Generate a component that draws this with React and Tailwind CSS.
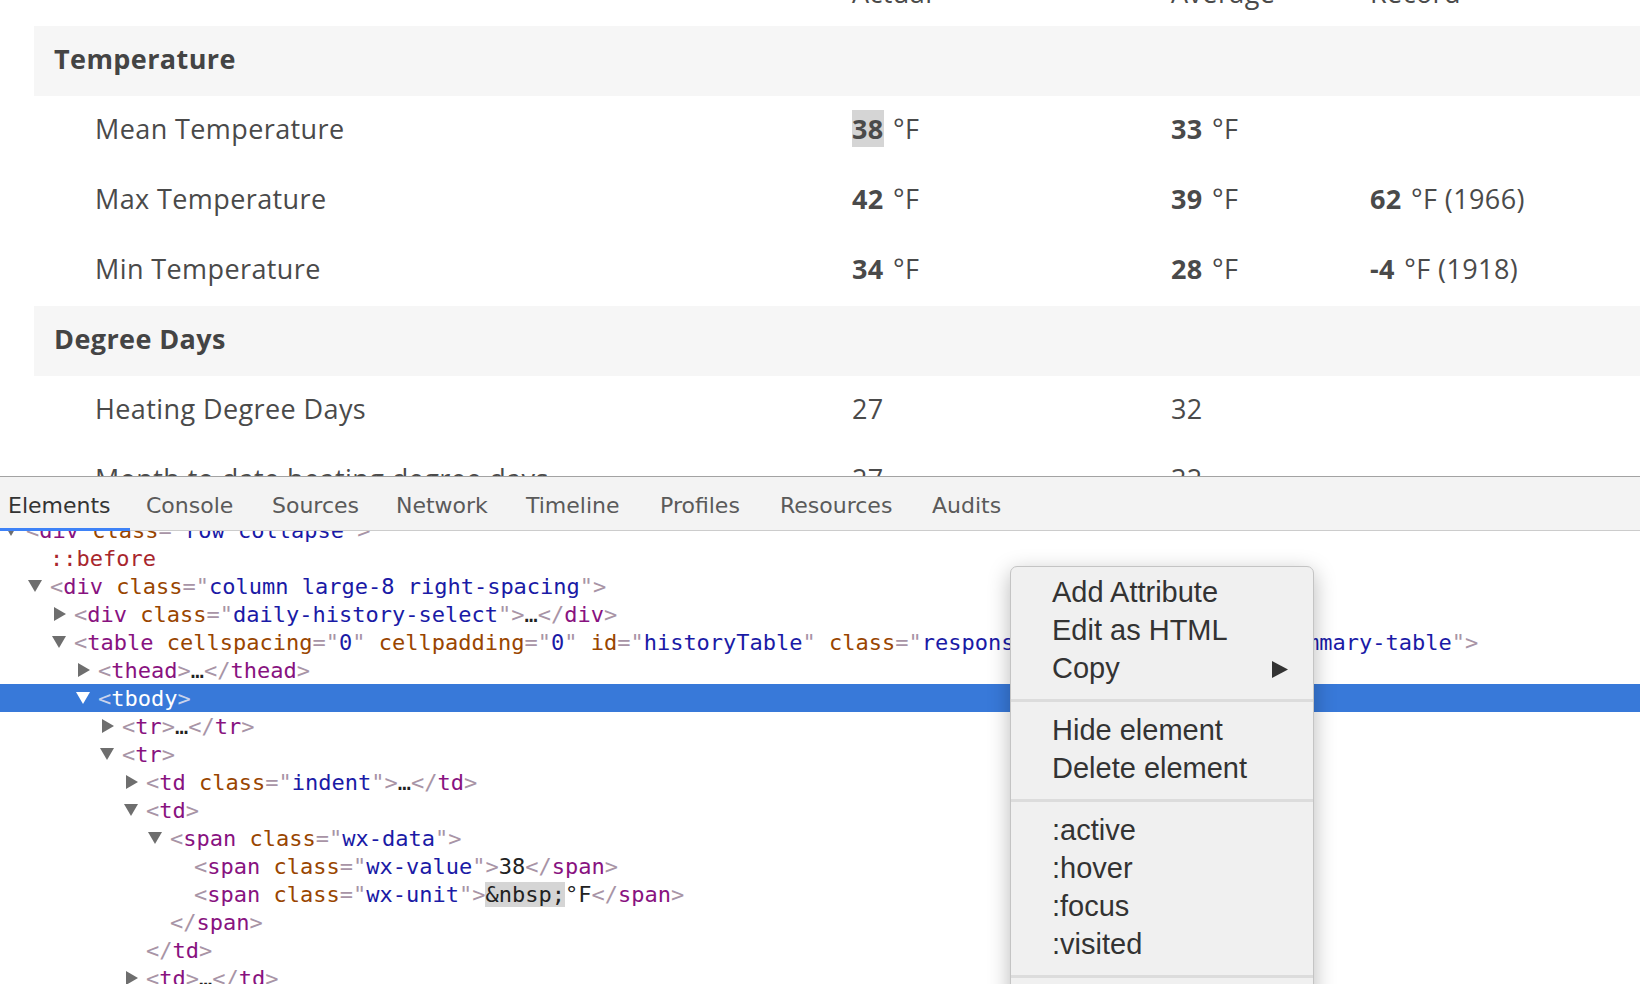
import React from "react";

const PAD = {
  "-1": "pl-[2px]",
  0: "pl-[26px]",
  1: "pl-[50px]",
  2: "pl-[74px]",
  3: "pl-[98px]",
  4: "pl-[122px]",
  5: "pl-[146px]",
  6: "pl-[170px]",
};

function Down({ white }) {
  return (
    <svg width="14" height="12" viewBox="0 0 14 12" className="ml-[2px]">
      <path d="M0 0 H14 L7 12 Z" fill={white ? "#ffffff" : "#6e6e6e"} />
    </svg>
  );
}

function Right() {
  return (
    <svg width="12" height="14" viewBox="0 0 12 14" className="ml-[4px]">
      <path d="M0 0 L12 7 L0 14 Z" fill="#6e6e6e" />
    </svg>
  );
}

const P = ({ c, sel }) => <span className={sel ? "text-[#c9d3ec]" : "text-[#a894a6]"}>{c}</span>;
const Tg = ({ c, sel }) => <span className={sel ? "text-white" : "text-[#881280]"}>{c}</span>;
const At = ({ c }) => <span className="text-[#994500]">{c}</span>;
const Vl = ({ c }) => <span className="text-[#1a1aa6]">{c}</span>;
const Tx = ({ c }) => <span className="text-[#222222]">{c}</span>;

function Attr({ name, value }) {
  return (
    <>
      {" "}
      <At c={name} />
      <P c={'="'} />
      <Vl c={value} />
      <P c={'"'} />
    </>
  );
}

function TreeRow({ level, arrow, selected, children }) {
  return (
    <div
      className={`flex h-[28px] items-center whitespace-nowrap ${PAD[level]} ${
        selected ? "bg-[#3879d9]" : ""
      }`}
    >
      <div className="flex w-[24px] shrink-0 items-center">
        {arrow === "down" && <Down white={selected} />}
        {arrow === "right" && <Right />}
      </div>
      <div>{children}</div>
    </div>
  );
}

function Value({ n, unit, extra, bold = true, hl }) {
  return (
    <span>
      <span className={`${bold ? "font-bold" : ""} ${hl ? "bg-[#d5d5d5]" : ""}`}>{n}</span>
      {unit && <span className="ml-[2px]"> °F</span>}
      {extra && <span> {extra}</span>}
    </span>
  );
}

function DataRow({ label, a, b, c, head }) {
  return (
    <div className={`flex h-[70px] items-center ${head ? "pt-[5px]" : "pb-[3px]"}`}>
      <div className="w-[818px] shrink-0 pl-[61px]">{label}</div>
      <div className="w-[319px] shrink-0">{a}</div>
      <div className="w-[199px] shrink-0">{b}</div>
      <div>{c}</div>
    </div>
  );
}

function Band({ title }) {
  return (
    <div className="flex h-[70px] items-center bg-[#f6f6f6] pb-[3px] pl-[20px] font-bold text-[#444444]">
      {title}
    </div>
  );
}

const tabs = [
  ["Elements", "w-[138px]"],
  ["Console", "w-[126px]"],
  ["Sources", "w-[124px]"],
  ["Network", "w-[130px]"],
  ["Timeline", "w-[134px]"],
  ["Profiles", "w-[120px]"],
  ["Resources", "w-[152px]"],
  ["Audits", "w-[120px]"],
];

const menu = [
  ["Add Attribute", "Edit as HTML", "Copy"],
  ["Hide element", "Delete element"],
  [":active", ":hover", ":focus", ":visited"],
];

export default function App() {
  return (
    <div className="relative h-[984px] w-[1640px] overflow-hidden bg-white">
      {/* Page content */}
      <div className="h-[476px] overflow-hidden font-['Open_Sans',sans-serif] text-[27px] tracking-[0.4px] text-[#4a4a4a]">
        <div className="-mt-[44px] pl-[34px]">
          <DataRow head label="" a="Actual" b="Average" c="Record" />
          <Band title="Temperature" />
          <DataRow label="Mean Temperature" a={<Value n="38" unit hl />} b={<Value n="33" unit />} />
          <DataRow
            label="Max Temperature"
            a={<Value n="42" unit />}
            b={<Value n="39" unit />}
            c={<Value n="62" unit extra="(1966)" />}
          />
          <DataRow
            label="Min Temperature"
            a={<Value n="34" unit />}
            b={<Value n="28" unit />}
            c={<Value n="-4" unit extra="(1918)" />}
          />
          <Band title="Degree Days" />
          <DataRow label="Heating Degree Days" a="27" b="32" />
          <DataRow label="Month to date heating degree days" a="27" b="32" />
        </div>
      </div>

      {/* DevTools */}
      <div className="border-t border-[#a3a3a3]">
        <div className="flex h-[54px] items-center border-b border-[#cccccc] bg-[#f3f3f3] pl-[8px] pt-[3px] font-['DejaVu_Sans',sans-serif] text-[22px] text-[#5a5a5a]">
          {tabs.map(([t, w], i) => (
            <div key={t} className={`${w} relative flex h-full items-center ${i === 0 ? "text-[#333333]" : ""}`}>
              {t}
              {i === 0 && <div className="absolute bottom-[-1px] left-[-8px] h-[3px] w-[130px] bg-[#3e82f7]" />}
            </div>
          ))}
        </div>

        <div className="h-[453px] overflow-hidden font-['DejaVu_Sans_Mono',monospace] text-[22px]">
          <div className="-mt-[15px]">
            <TreeRow level={-1} arrow="down">
              <P c="<" />
              <Tg c="div" />
              <Attr name="class" value="row collapse" />
              <P c=">" />
            </TreeRow>
            <TreeRow level={0}>
              <span className="text-[#a8262d]">::before</span>
            </TreeRow>
            <TreeRow level={0} arrow="down">
              <P c="<" />
              <Tg c="div" />
              <Attr name="class" value="column large-8 right-spacing" />
              <P c=">" />
            </TreeRow>
            <TreeRow level={1} arrow="right">
              <P c="<" />
              <Tg c="div" />
              <Attr name="class" value="daily-history-select" />
              <P c=">" />
              <Tx c="…" />
              <P c="</" />
              <Tg c="div" />
              <P c=">" />
            </TreeRow>
            <TreeRow level={1} arrow="down">
              <P c="<" />
              <Tg c="table" />
              <Attr name="cellspacing" value="0" />
              <Attr name="cellpadding" value="0" />
              <Attr name="id" value="historyTable" />
              <Attr name="class" value="responsive airport-history-summary-table" />
              <P c=">" />
            </TreeRow>
            <TreeRow level={2} arrow="right">
              <P c="<" />
              <Tg c="thead" />
              <P c=">" />
              <Tx c="…" />
              <P c="</" />
              <Tg c="thead" />
              <P c=">" />
            </TreeRow>
            <TreeRow level={2} arrow="down" selected>
              <P c="<" sel />
              <Tg c="tbody" sel />
              <P c=">" sel />
            </TreeRow>
            <TreeRow level={3} arrow="right">
              <P c="<" />
              <Tg c="tr" />
              <P c=">" />
              <Tx c="…" />
              <P c="</" />
              <Tg c="tr" />
              <P c=">" />
            </TreeRow>
            <TreeRow level={3} arrow="down">
              <P c="<" />
              <Tg c="tr" />
              <P c=">" />
            </TreeRow>
            <TreeRow level={4} arrow="right">
              <P c="<" />
              <Tg c="td" />
              <Attr name="class" value="indent" />
              <P c=">" />
              <Tx c="…" />
              <P c="</" />
              <Tg c="td" />
              <P c=">" />
            </TreeRow>
            <TreeRow level={4} arrow="down">
              <P c="<" />
              <Tg c="td" />
              <P c=">" />
            </TreeRow>
            <TreeRow level={5} arrow="down">
              <P c="<" />
              <Tg c="span" />
              <Attr name="class" value="wx-data" />
              <P c=">" />
            </TreeRow>
            <TreeRow level={6}>
              <P c="<" />
              <Tg c="span" />
              <Attr name="class" value="wx-value" />
              <P c=">" />
              <Tx c="38" />
              <P c="</" />
              <Tg c="span" />
              <P c=">" />
            </TreeRow>
            <TreeRow level={6}>
              <P c="<" />
              <Tg c="span" />
              <Attr name="class" value="wx-unit" />
              <P c=">" />
              <span className="bg-[#d5d5d5] text-[#222222]">&amp;nbsp;</span>
              <Tx c="°F" />
              <P c="</" />
              <Tg c="span" />
              <P c=">" />
            </TreeRow>
            <TreeRow level={5}>
              <P c="</" />
              <Tg c="span" />
              <P c=">" />
            </TreeRow>
            <TreeRow level={4}>
              <P c="</" />
              <Tg c="td" />
              <P c=">" />
            </TreeRow>
            <TreeRow level={4} arrow="right">
              <P c="<" />
              <Tg c="td" />
              <P c=">" />
              <Tx c="…" />
              <P c="</" />
              <Tg c="td" />
              <P c=">" />
            </TreeRow>
          </div>
        </div>
      </div>

      {/* Context menu */}
      <div className="absolute left-[1010px] top-[566px] w-[304px] rounded-[7px] border border-[#c4c4c4] bg-[#f0f0f0] pt-[7px] font-['Liberation_Sans',sans-serif] text-[29px] text-[#333333] shadow-[0_6px_22px_rgba(0,0,0,0.28)]">
        {menu.map((group, gi) => (
          <div key={gi}>
            {group.map((item) => (
              <div key={item} className="flex h-[38px] items-center justify-between pl-[41px] pr-[25px]">
                <span>{item}</span>
                {item === "Copy" && (
                  <svg width="16" height="17" viewBox="0 0 16 17">
                    <path d="M0 0 L16 8.5 L0 17 Z" fill="#333333" />
                  </svg>
                )}
              </div>
            ))}
            <div className="flex h-[24px] items-center">
              <div className="h-[3px] w-full bg-[#dcdcdc]" />
            </div>
          </div>
        ))}
        <div className="h-[30px]" />
      </div>
    </div>
  );
}
